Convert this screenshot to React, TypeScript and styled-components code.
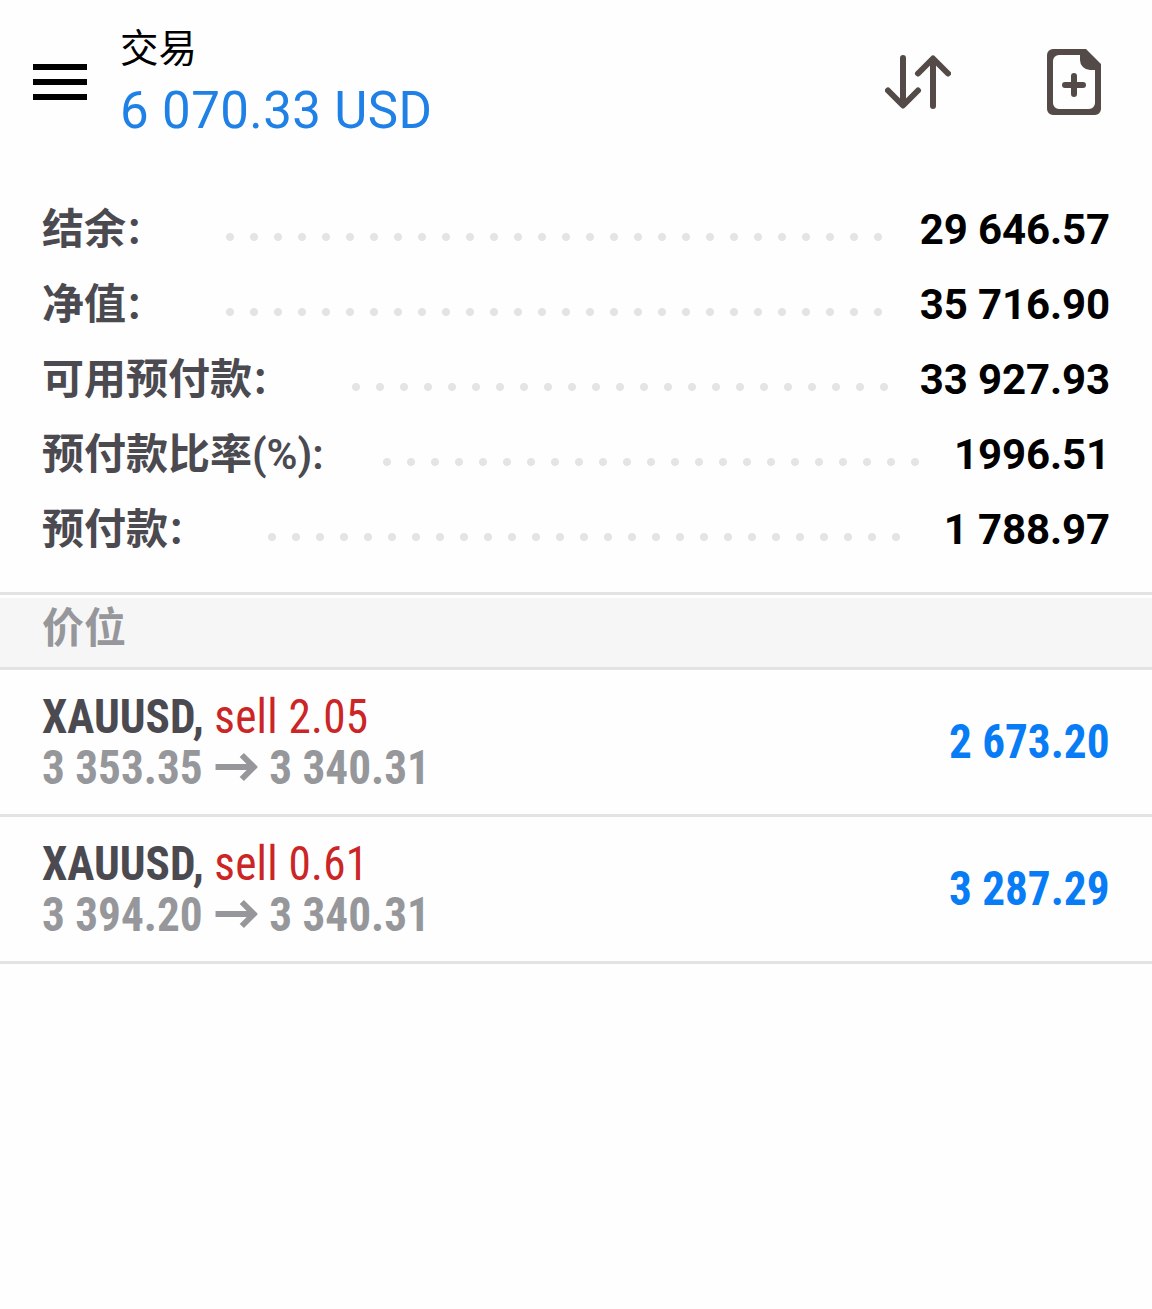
import React from "react";
import styled, { createGlobalStyle } from "styled-components";

const GlobalStyle = createGlobalStyle`
  *, *::before, *::after { box-sizing: border-box; }
  body {
    margin: 0;
    background: #fefefe;
    font-family: Roboto, "Noto Sans CJK SC", sans-serif;
  }
`;

const Screen = styled.main`
  display: flex;
  flex-direction: column;
  min-height: 1309px;
`;

const Header = styled.header`
  display: flex;
  align-items: flex-start;
  height: 165px;
  padding: 0 51px 0 33px;
`;

const IconButton = styled.button<{ $top: number; $left?: number }>`
  display: block;
  flex: none;
  margin: ${(p) => p.$top}px 0 0 ${(p) => p.$left ?? 0}px;
  padding: 0;
  border: 0;
  background: none;
  color: #544b48;
  svg { display: block; }
`;

const MenuButton = styled(IconButton)`
  display: flex;
  flex-direction: column;
  gap: 9px;
`;

const MenuBar = styled.span`
  width: 54px;
  height: 6px;
  background: #000;
`;

const Titles = styled.div`
  flex: 1;
  margin-left: 33px;
  padding-top: 27px;
`;

const Title = styled.h1`
  margin: 0;
  font-size: 38.5px;
  line-height: 44px;
  font-weight: 400;
  color: #000;
`;

const Profit = styled.div`
  margin-top: 10px;
  font-size: 51px;
  line-height: 60px;
  letter-spacing: 0.4px;
  white-space: nowrap;
  color: #1f80e5;
`;

const Summary = styled.dl`
  margin: 0;
  padding: 27px 42px 25px;
`;

const SummaryRow = styled.div`
  display: flex;
  align-items: center;
  height: 75px;
`;

const Label = styled.dt`
  padding-top: 1px;
  font-size: 42px;
  line-height: 60px;
  font-weight: 700;
  white-space: nowrap;
  color: #4b4a50;
`;

const Ratio = styled.span`
  display: inline-block;
  width: 73px;
  font-weight: 600;
`;

const Colon = styled.span`
  position: relative;
  top: 0;
  left: -1px;
  display: inline-block;
  width: 42px;
  font-size: 37px;
  line-height: 1;
`;

const Dots = styled.span`
  flex: 1;
  height: 8px;
  margin: 15px 28px 0 58px;
  background: radial-gradient(circle at 4px 4px, #e4e4e4 3.6px, transparent 4.4px) 0 0 / 24px 8px repeat-x;
`;

const Value = styled.dd`
  margin: 0;
  font-size: 42px;
  line-height: 60px;
  font-weight: 700;
  letter-spacing: -0.12px;
  white-space: nowrap;
  color: #000;
`;

const SectionTitle = styled.h2`
  margin: 0;
  height: 78px;
  padding: 0 42px;
  border-top: 3px solid #e3e3e3;
  border-bottom: 3px solid #e3e3e3;
  background: linear-gradient(#fefefe 3px, #f6f6f6 3px);
  font-size: 42px;
  line-height: 67px;
  font-weight: 700;
  color: #96979b;
`;

const Position = styled.article`
  display: flex;
  align-items: center;
  justify-content: space-between;
  height: 147px;
  padding: 0 42px;
  border-bottom: 3px solid #e3e3e3;
  font-family: "Roboto Condensed", Roboto, sans-serif;
  font-stretch: condensed;
  font-size: 48px;
  font-weight: 700;
  line-height: 51px;
  white-space: nowrap;
`;

const Details = styled.div`
  transform: scaleX(0.942);
  transform-origin: left;
`;

const Symbol = styled.div`
  color: #4b4a50;
`;

const Side = styled.span`
  font-weight: 400;
  letter-spacing: 0.25px;
  color: #cb2526;
`;

const Prices = styled.div`
  display: flex;
  align-items: center;
  color: #96979b;
  svg { margin: -2px 12px 0 13px; }
`;

const Result = styled.div`
  margin-bottom: 2px;
  transform: scaleX(0.942);
  transform-origin: right;
  color: #087cf5;
`;

const summary = [
  { label: "结余", value: "29 646.57" },
  { label: "净值", value: "35 716.90" },
  { label: "可用预付款", value: "33 927.93" },
  { label: "预付款比率", unit: "(%):", value: "1996.51" },
  { label: "预付款", value: "1 788.97" },
];

const positions = [
  { volume: "2.05", open: "3 353.35", current: "3 340.31", profit: "2 673.20" },
  { volume: "0.61", open: "3 394.20", current: "3 340.31", profit: "3 287.29" },
];

const SortIcon = () => (
  <svg width="66" height="54" viewBox="0 0 66 54" fill="none" stroke="currentColor" strokeWidth="6" strokeLinecap="round" strokeLinejoin="round">
    <path d="M18 3v47M3 35.5 18 50.5 33 35.5M48 51V4M33 18.5 48 3.5 63 18.5" />
  </svg>
);

const NewOrderIcon = () => (
  <svg width="54" height="66" viewBox="0 0 54 66" fill="currentColor">
    <path fillRule="evenodd" d="M6 0H39L54 15V60a6 6 0 0 1-6 6H6a6 6 0 0 1-6-6V6a6 6 0 0 1 6-6ZM12 6a6 6 0 0 0-6 6V54a6 6 0 0 0 6 6H42a6 6 0 0 0 6-6V21H43A10 10 0 0 1 33 11V6Z" />
    <path d="M27 27v18M18 36h18" stroke="currentColor" strokeWidth="6" strokeLinecap="round" />
  </svg>
);

const ArrowIcon = () => (
  <svg width="45.6" height="30" viewBox="0 0 43 30" preserveAspectRatio="none" fill="none" stroke="currentColor" strokeWidth="6">
    <path d="M0 15H38M26.5 3 38.5 15 26.5 27" />
  </svg>
);

export default function App() {
  return (
    <Screen>
      <GlobalStyle />
      <Header>
        <MenuButton $top={64} aria-label="菜单">
          <MenuBar />
          <MenuBar />
          <MenuBar />
        </MenuButton>
        <Titles>
          <Title>交易</Title>
          <Profit>6 070.33 USD</Profit>
        </Titles>
        <IconButton $top={55} aria-label="排序">
          <SortIcon />
        </IconButton>
        <IconButton $top={49} $left={96} aria-label="新订单">
          <NewOrderIcon />
        </IconButton>
      </Header>
      <Summary>
        {summary.map(({ label, unit, value }) => (
          <SummaryRow key={label}>
            <Label>
              {label}
              {unit ? <Ratio>{unit}</Ratio> : <Colon>：</Colon>}
            </Label>
            <Dots />
            <Value>{value}</Value>
          </SummaryRow>
        ))}
      </Summary>
      <SectionTitle>价位</SectionTitle>
      {positions.map((p) => (
        <Position key={p.open}>
          <Details>
            <Symbol>
              XAUUSD, <Side>sell {p.volume}</Side>
            </Symbol>
            <Prices>
              {p.open}
              <ArrowIcon />
              {p.current}
            </Prices>
          </Details>
          <Result>{p.profit}</Result>
        </Position>
      ))}
    </Screen>
  );
}
